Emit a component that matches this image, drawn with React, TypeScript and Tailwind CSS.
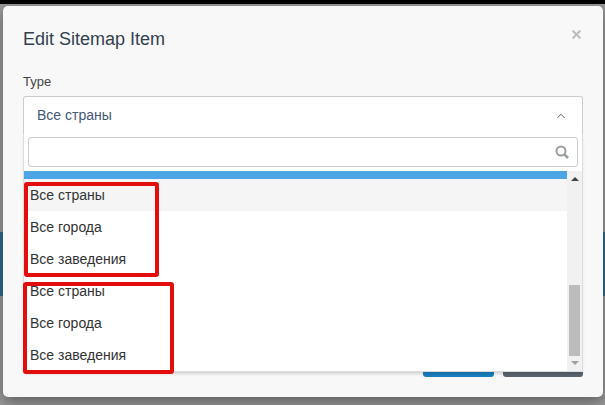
import { ChevronUp, X } from 'lucide-react';

const rows = ['Все страны', 'Все города', 'Все заведения', 'Все страны', 'Все города', 'Все заведения'];

export default function App() {
  return (
    <div className="relative h-[405px] w-[605px] overflow-hidden bg-[#9a9a9a] font-['Liberation_Sans',sans-serif]">
      <div className="h-1 bg-black" />
      {/* page behind the backdrop */}
      <div className="absolute left-0 right-0 top-[232px] h-16 bg-[#2f6b96]" />

      <div className="relative ml-[3px] mt-[2px] flex h-[391px] w-[600px] flex-col rounded-[5px] bg-[#f8f8f8] shadow-[0_5px_15px_rgba(0,0,0,0.4)]">
        {/* Header */}
        <div className="flex items-start justify-between pl-5 pr-[20px] pt-[21px]">
          <h3 className="text-[18px] leading-[25px] text-[#33414f]">Edit Sitemap Item</h3>
          <X className="mt-px h-[13px] w-[13px] text-[#bdbdbd]" strokeWidth={4} />
        </div>

        {/* Body */}
        <div className="relative flex-1 px-5 pt-[22px]">
          <label className="block text-[13px] leading-[16px] text-[#444]">Type</label>
          <div className="relative mt-[6px] flex h-[38px] items-center justify-between rounded-t-[3px] border border-b-0 border-[#ccc] bg-white pl-[13px] pr-[14px]">
            <span className="text-[14px] text-[#3f5878]">Все страны</span>
            <ChevronUp className="h-[14px] w-[14px] text-[#44566c]" strokeWidth={1.5} />
          </div>

          {/* Dropdown */}
          <div className="absolute left-5 top-[82px] z-10 w-[560px] border-x border-b border-[#ddd] bg-white shadow-[0_3px_3px_-1px_rgba(0,0,0,0.15)]">
            <div className="px-1 pb-[4px] pt-[3px]">
              <div className="flex h-[30px] items-center justify-end rounded-[3px] border border-[#ccc] bg-white pr-[8px]">
                <svg viewBox="0 0 14 14" className="h-[14px] w-[14px]" fill="none" stroke="#9a9f9f">
                  <circle cx="6" cy="6" r="4.5" strokeWidth="2" />
                  <path d="M9.5 9.5 13 13" strokeWidth="2.6" />
                </svg>
              </div>
            </div>
            <div className="flex h-[200px] overflow-hidden">
              <div className="flex-1 overflow-hidden">
                <div className="h-2 bg-[#4ea5e6]" />
                {rows.map((row, i) => (
                  <div
                    key={i}
                    className={`h-8 pl-[6px] text-[14px] leading-8 text-[#333] ${i === 0 ? 'bg-[#f5f5f5]' : ''}`}
                  >
                    {row}
                  </div>
                ))}
              </div>
              {/* Scrollbar */}
              <div className="flex w-[15px] flex-col items-center bg-[#f1f1f1]">
                <div className="mt-[6px] h-0 w-0 border-x-[4px] border-b-[4px] border-x-transparent border-b-[#444]" />
                <div className="mt-[104px] h-[71px] w-[11px] bg-[#bcbcbc]" />
                <div className="mt-[5px] h-0 w-0 border-x-[4px] border-t-[4px] border-x-transparent border-t-[#a0a0a0]" />
              </div>
            </div>
          </div>
        </div>

        {/* Footer */}
        <div className="flex justify-end gap-[9px] pb-5 pr-5">
          <button className="h-8 w-[71px] rounded-[3px] bg-[#1a7fc1]" />
          <button className="h-8 w-[80px] rounded-[3px] bg-[#5a6470]" />
        </div>
      </div>

      {/* Annotation boxes */}
      <div className="absolute left-[24px] top-[182px] z-20 h-[95px] w-[135px] rounded-[3px] border-[4px] border-[#e30d0d]" />
      <div className="absolute left-[23px] top-[282px] z-20 h-[92px] w-[151px] rounded-[3px] border-[4px] border-[#e30d0d]" />
    </div>
  );
}
